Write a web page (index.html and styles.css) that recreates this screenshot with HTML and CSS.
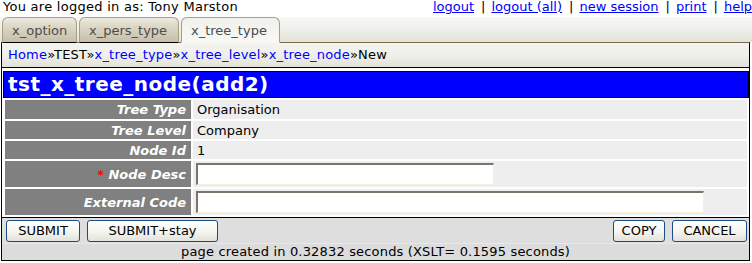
FILE: index.html
```html
<!DOCTYPE html>
<html>
<head>
<meta charset="utf-8">
<link rel="stylesheet" href="styles.css">
</head>
<body>
<div class="topbar">
  <span class="user">You are logged in as: Tony Marston</span>
  <span class="links"><a href="#">logout</a><span class="sep">|</span><a href="#">logout (all)</a><span class="sep">|</span><a href="#">new session</a><span class="sep">|</span><a href="#">print</a><span class="sep">|</span><a href="#">help</a></span>
</div>
<div class="tabbar">
  <div class="tab t1">x_option</div>
  <div class="tab t2">x_pers_type</div>
  <div class="tab t3 active">x_tree_type</div>
</div>
<div class="main">
  <div class="crumbs"><a href="#">Home</a>»TEST»<a href="#">x_tree_type</a>»<a href="#">x_tree_level</a>»<a href="#">x_tree_node</a>»New</div>
  <div class="content">
    <h1 class="title">tst_x_tree_node(add2)</h1>
    <table class="fields">
      <tr class="r1"><td class="label">Tree Type</td><td class="value">Organisation</td></tr>
      <tr><td class="label">Tree Level</td><td class="value">Company</td></tr>
      <tr><td class="label">Node Id</td><td class="value">1</td></tr>
      <tr class="inrow"><td class="label"><span class="req">*</span> Node Desc</td><td class="value"><input class="inp short" type="text"></td></tr>
      <tr class="inrow"><td class="label">External Code</td><td class="value"><input class="inp long" type="text"></td></tr>
    </table>
  </div>
  <div class="actions">
    <div class="group">
      <button class="btn w-submit">SUBMIT</button>
      <button class="btn w-stay">SUBMIT+stay</button>
    </div>
    <div class="group">
      <button class="btn w-copy">COPY</button>
      <button class="btn w-cancel">CANCEL</button>
    </div>
  </div>
  <div class="footer">page created in 0.32832 seconds (XSLT= 0.1595 seconds)</div>
</div>
</body>
</html>
```
FILE: styles.css
```css
* { box-sizing: border-box; }
html, body { margin: 0; padding: 0; background: #fff; }
body {
  width: 752px;
  font-family: "DejaVu Sans", Verdana, sans-serif;
  font-size: 13px;
  color: #000;
  overflow: hidden;
}
a { color: #0000ff; }

/* top line */
.topbar {
  height: 17px;
  display: flex;
  justify-content: space-between;
  align-items: flex-start;
  padding-left: 3px;
  line-height: 13px;
  white-space: nowrap;
}
.topbar .user { letter-spacing: 0.27px; }
.topbar .links a { text-decoration: underline; }
.topbar .sep { padding: 0 6px 0 7px; }

/* tabs */
.tabbar {
  height: 25px;
  display: flex;
  align-items: flex-start;
  gap: 2px;
  padding-left: 2px;
  background: linear-gradient(#f7f7f4, #eff1eb 45%, #e9ebe3 70%, #e4e2d8);
  position: relative;
  z-index: 1;
}
.tab {
  height: 26px;
  padding: 5px 0 0 9px;
  border: 1px solid #a89e84;
  border-bottom: 1px solid #000;
  border-radius: 6px 6px 0 0;
  background: linear-gradient(#eeeae0, #ddd7c6 35%, #cfc8b2 75%, #c6bea6);
  color: #4c4c4c;
  white-space: nowrap;
  line-height: 15px;
}
.t1 { width: 75px; }
.t2 { width: 100px; }
.t3 { width: 99px; }
.tab.active {
  background: linear-gradient(#f2f2ec, #f8f8f4);
  border-bottom-color: #f8f8f4;
}

/* main frame */
.main {
  margin: 0 2px 0 1px;
  border: 1px solid #000;
  border-top: 1px solid #7a6a50;
  height: 219px;
  background: #fff;
}
.crumbs {
  height: 25px;
  padding-left: 6px;
  border-bottom: 1px solid #000;
  background: linear-gradient(#f4f4ee, #eef0ea 50%, #e4e2d8);
  white-space: nowrap;
  line-height: 24px;
  letter-spacing: 0.18px;
}
.crumbs a { text-decoration: none; }

.content {
  padding: 3px 0 0 1px;
  border-bottom: 1px solid #000;
  height: 150px;
}
.title {
  margin: 0;
  width: 746px;
  height: 27px;
  background: #0000ff;
  color: #fff;
  border: 1px solid #000;
  font-size: 20px;
  font-weight: bold;
  line-height: 25px;
  padding-left: 4px;
  letter-spacing: 0.48px;
  white-space: nowrap;
}
.fields {
  width: 746px;
  border-collapse: separate;
  border-spacing: 2px;
  margin-left: 0;
}
.fields td { padding: 0; height: 18px; line-height: 15px; vertical-align: middle; }
.fields .r1 td { height: 19px; }
.fields .label {
  width: 186px;
  background: #808080;
  color: #fff;
  font-weight: bold;
  font-style: italic;
  text-align: right;
  padding-right: 5px;
  white-space: nowrap;
}
.fields .value {
  background: #eeeeee;
  padding-left: 4px;
}
.fields .inrow td { height: 26px; }
.fields .inrow .value { padding-left: 3px; vertical-align: top; padding-top: 2px; }
.req { color: #ff0000; font-style: normal; }
.inp {
  display: block;
  height: 22px;
  border-style: solid;
  border-color: #7a746a #f2f0e2 #f2f0e2 #7a746a;
  border-width: 2px 1px 1px 2px;
  background: #fff;
  padding: 0;
  margin: 0;
}
.inp.short { width: 298px; }
.inp.long { width: 508px; }

/* buttons bar */
.actions {
  height: 26px;
  background: #dedede;
  display: flex;
  justify-content: space-between;
  align-items: center;
  padding: 0 2px 0 4px;
  border-bottom: 1px solid #e8e8e8;
}
.group { display: flex; gap: 7px; }
.btn {
  height: 22px;
  border: 1px solid #1c4c84;
  border-radius: 3px;
  background: linear-gradient(#ffffff, #f4f4f0 55%, #e2e2da);
  font-family: "DejaVu Sans", Verdana, sans-serif;
  font-size: 13px;
  line-height: 18px;
  color: #000;
  padding: 0;
}
.w-submit { width: 74px; }
.w-stay { width: 131px; }
.w-copy { width: 52px; }
.w-cancel { width: 75px; }

.footer {
  height: 16px;
  background: #dcdcdc;
  text-align: center;
  line-height: 16px;
  letter-spacing: 0.17px;
  white-space: nowrap;
}
```
